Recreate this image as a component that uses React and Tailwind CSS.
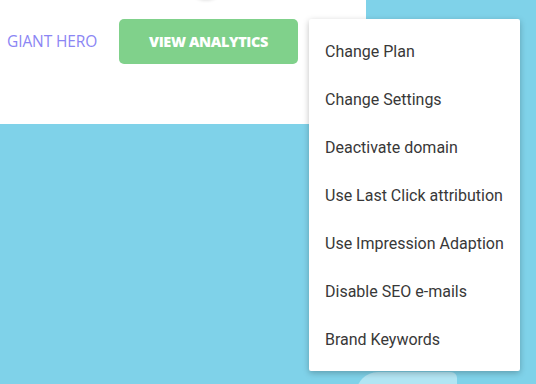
const menuItems = [
  'Change Plan',
  'Change Settings',
  'Deactivate domain',
  'Use Last Click attribution',
  'Use Impression Adaption',
  'Disable SEO e-mails',
  'Brand Keywords',
];

export default function App() {
  return (
    <div className="relative w-[536px] h-[384px] overflow-hidden bg-[#7fd2e9]" style={{ fontFamily: 'Roboto, sans-serif' }}>
      {/* card */}
      <div className="relative w-[366px] h-[124px] bg-white">
        <div className="absolute left-[186px] top-[-40px] w-[40px] h-[40px] rounded-full bg-white shadow-[0_1px_3px_rgba(0,0,0,0.1)]" />
        <div className="flex items-center pt-[19px]">
          <span className="ml-[7px] w-[112px] text-[15.5px] text-[#8b86f4] tracking-[-0.1px]" style={{ fontFamily: '"Open Sans", sans-serif' }}>
            GIANT HERO
          </span>
          <button className="w-[179px] h-[45px] pt-[1px] rounded-[5px] bg-[#80d18b] text-white text-[14.5px] font-extrabold tracking-[-0.4px]" style={{ fontFamily: '"Open Sans", sans-serif' }}>
            VIEW ANALYTICS
          </button>
        </div>
      </div>

      {/* light blue shape at the bottom */}
      <div className="absolute left-[356px] top-[372px] w-[101px] h-[40px] rounded-tl-[22px] rounded-tr-[6px] bg-[#b2e5f3]" />

      {/* dropdown menu */}
      <div className="absolute left-[309px] top-[19px] w-[211px] pt-[9px] pb-[7px] bg-white rounded-[2px] shadow-[0_2px_6px_rgba(0,0,0,0.25)]">
        {menuItems.map((item) => (
          <div key={item} className="h-[48px] flex items-center px-4 text-[16px] text-[#383838]">
            {item}
          </div>
        ))}
      </div>
    </div>
  );
}
